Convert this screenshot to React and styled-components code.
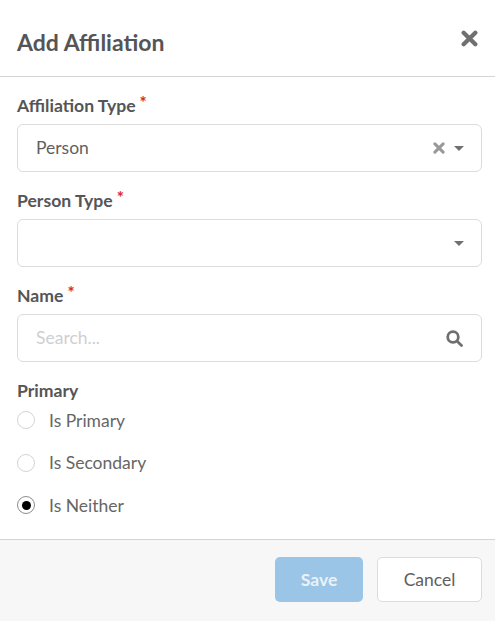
import React from 'react';
import styled, { createGlobalStyle } from 'styled-components';

const GlobalStyle = createGlobalStyle`
  html, body {
    margin: 0;
    padding: 0;
    background: #fff;
  }
  * {
    box-sizing: border-box;
  }
`;

const CloseIcon = ({ size, color }) => (
  <svg width={size} height={size} viewBox="0 0 16 16" fill="none" stroke={color} strokeWidth="4" strokeLinecap="round">
    <path d="M2.5 2.5 13.5 13.5M13.5 2.5 2.5 13.5" />
  </svg>
);

const Caret = () => (
  <svg width="10" height="5" viewBox="0 0 10 5" fill="#707070">
    <path d="M0 0h10L5 5z" />
  </svg>
);

const SearchIcon = () => (
  <svg width="17" height="17" viewBox="0 0 16 16" fill="none" stroke="#6f6f6f" strokeWidth="2.6" strokeLinecap="round">
    <circle cx="6.6" cy="6.6" r="5" />
    <path d="M10.5 10.5 14.6 14.6" />
  </svg>
);

const App = () => (
  <Modal>
    <GlobalStyle />
    <Header>
      <Title>Add Affiliation</Title>
      <CloseIcon size={17} color="#707070" />
    </Header>
    <Body>
      <Field>
        <Label required>Affiliation Type</Label>
        <Control>
          <Value>Person</Value>
          <Icons>
            <CloseIcon size={12} color="#999" />
            <Caret />
          </Icons>
        </Control>
      </Field>
      <Field>
        <Label required>Person Type</Label>
        <Control>
          <Value />
          <Icons>
            <Caret />
          </Icons>
        </Control>
      </Field>
      <Field>
        <Label required>Name</Label>
        <Control>
          <Value $muted>Search...</Value>
          <Icons $search>
            <SearchIcon />
          </Icons>
        </Control>
      </Field>
      <Group>
        <Label>Primary</Label>
        <RadioList>
          <RadioRow><Radio /><RadioText>Is Primary</RadioText></RadioRow>
          <RadioRow><Radio /><RadioText>Is Secondary</RadioText></RadioRow>
          <RadioRow><Radio $checked /><RadioText>Is Neither</RadioText></RadioRow>
        </RadioList>
      </Group>
    </Body>
    <Footer>
      <SaveButton>Save</SaveButton>
      <CancelButton>Cancel</CancelButton>
    </Footer>
  </Modal>
);

const Modal = styled.div`
  width: 495px;
  height: 621px;
  display: flex;
  flex-direction: column;
  background: #fff;
  font-family: Lato, "Liberation Sans", sans-serif;
  color: #555;
`;

const Header = styled.div`
  height: 77px;
  padding: 0 17px;
  display: flex;
  align-items: center;
  justify-content: space-between;
  border-bottom: 1px solid #d4d4d5;
`;

const Title = styled.div`
  margin-top: 8px;
  font-size: 23px;
  font-weight: 700;
  color: #555;
`;

const Body = styled.div`
  flex: 1;
  padding: 16px 13px 0 17px;
  display: flex;
  flex-direction: column;
  gap: 16px;
`;

const Field = styled.div`
  display: flex;
  flex-direction: column;
  gap: 6px;
`;

const Group = styled.div`
  display: flex;
  flex-direction: column;
  gap: 5.4px;
`;

const Label = styled.div`
  font-size: 17.6px;
  line-height: 25px;
  font-weight: 700;
  color: #555;
  ${p => p.required && `
    &::after {
      content: '*';
      color: #db2828;
      margin-left: 4px;
      font-size: 17px;
      position: relative;
      top: -3px;
    }
  `}
`;

const Control = styled.div`
  height: 48px;
  padding: 0 19px 0 18px;
  border: 1px solid #dcdcdc;
  border-radius: 6px;
  display: flex;
  align-items: center;
  justify-content: space-between;
  background: #fff;
`;

const Value = styled.div`
  font-size: 17.5px;
  margin-top: -2px;
  color: ${p => (p.$muted ? '#cfcfcf' : '#5f5f5f')};
`;

const Icons = styled.div`
  display: flex;
  align-items: center;
  gap: 9px;
  margin-right: ${p => (p.$search ? '-1px' : '-2px')};
`;

const RadioList = styled.div`
  display: flex;
  flex-direction: column;
  gap: 18.5px;
`;

const RadioRow = styled.div`
  display: flex;
  align-items: center;
  height: 24px;
  gap: 14px;
`;

const Radio = styled.span`
  width: 18px;
  height: 18px;
  border-radius: 50%;
  border: 1px solid ${p => (p.$checked ? '#8c8c8c' : '#d4d4d5')};
  background: #fff;
  display: flex;
  align-items: center;
  justify-content: center;
  &::after {
    content: '';
    display: ${p => (p.$checked ? 'block' : 'none')};
    width: 9px;
    height: 9px;
    border-radius: 50%;
    background: #000;
  }
`;

const RadioText = styled.span`
  font-size: 17.5px;
  color: #666;
`;

const Footer = styled.div`
  height: 82px;
  padding: 17px 13px 0 0;
  display: flex;
  justify-content: flex-end;
  gap: 14px;
  background: #f7f7f7;
  border-top: 1px solid #d4d4d5;
`;

const SaveButton = styled.button`
  width: 88px;
  height: 45px;
  border: none;
  border-radius: 5px;
  background: #9ac5e6;
  color: #e9f2f9;
  font-family: inherit;
  font-size: 17.5px;
  font-weight: 700;
`;

const CancelButton = styled.button`
  width: 105px;
  height: 45px;
  border: 1px solid #dcdcdc;
  border-radius: 5px;
  background: #fff;
  color: #5f5f5f;
  font-family: inherit;
  font-size: 17.5px;
`;

export default App;
